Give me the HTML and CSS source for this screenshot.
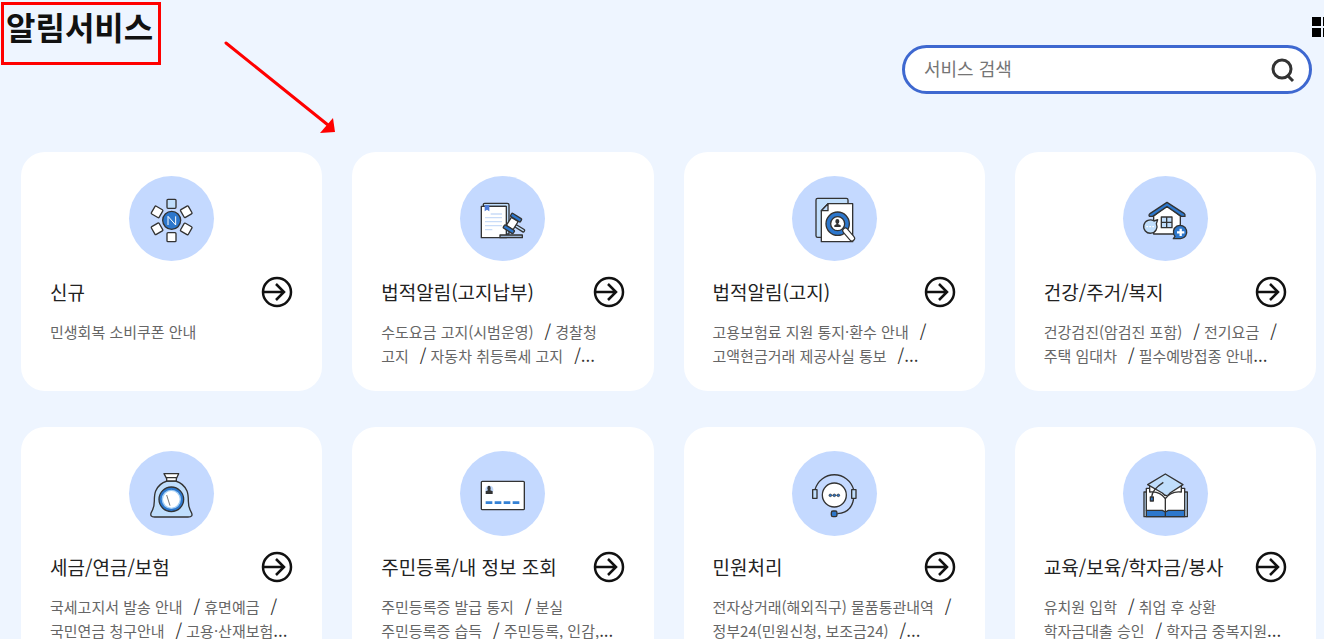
FILE: index.html
```html
<!DOCTYPE html>
<html lang="ko">
<head>
  <meta charset="UTF-8">
  <meta name="viewport" content="width=device-width, initial-scale=1">
  <title>알림서비스</title>
  <link rel="stylesheet" href="styles.css">
</head>
<body>
  <svg width="0" height="0" class="defs">
    <symbol id="go" viewBox="0 0 32 32">
      <circle cx="16" cy="16" r="14"/>
      <path d="M2 16h21M15 8l8 8-8 8"/>
    </symbol>
  </svg>

  <header>
    <h1>알림서비스</h1>
    <form class="search">
      <input type="search" placeholder="서비스 검색" aria-label="서비스 검색">
      <button type="button" aria-label="검색">
        <svg width="26" height="26" viewBox="0 0 26 26"><circle cx="12" cy="12" r="9"/><path d="M17 18l6 6"/></svg>
      </button>
    </form>
    <button class="menu" type="button" aria-label="전체 메뉴">
      <svg width="20" height="20" viewBox="0 0 20 20"><path d="M0 0h9v9H0zM11 0h9v9h-9zM0 11h9v9H0zM11 11h9v9h-9z"/></svg>
    </button>
    <svg class="pointer" width="116" height="96" viewBox="0 0 116 96">
      <path class="line" d="M4 4L106 86"/>
      <path class="head" d="M113 93L98 94 111 79z"/>
    </svg>
  </header>

  <main>
    <section class="card">
      <svg class="icon" viewBox="26 18 255 255">
        <g class="white">
          <rect x="140" y="88" width="27" height="27" rx="3" class="sky"/>
          <rect x="140" y="188" width="27" height="27" rx="3"/>
          <rect x="97" y="112" width="27" height="27" rx="3" transform="rotate(30 110 125)"/>
          <rect x="184" y="112" width="27" height="27" rx="3" transform="rotate(-30 197 125)"/>
          <rect x="97" y="163" width="27" height="27" rx="3" transform="rotate(-30 110 177)"/>
          <rect x="184" y="163" width="27" height="27" rx="3" transform="rotate(30 197 177)"/>
        </g>
        <circle cx="154" cy="151" r="27" class="blue"/>
        <path d="M143 165v-26l23 26v-26" class="mark"/>
      </svg>
      <div class="title"><h2>신규</h2><a href="#" aria-label="신규 바로가기"><svg><use href="#go"/></svg></a></div>
      <p>민생회복 소비쿠폰 안내</p>
    </section>

    <section class="card">
      <svg class="icon" viewBox="31 18 255 255">
        <path d="M101 109v-6q0-3 4-3h68q5 0 5 5v87h-9v-83z" class="sky"/>
        <path d="M95 109h75v94H95z" class="white"/>
        <path d="M105 105h14v19l-7-5-7 5z" class="ribbon"/>
        <path d="M123 132h34M106 143h51M106 155h51M106 167h51M106 179h22" class="rule"/>
        <rect x="151" y="195" width="67" height="8" class="gray"/>
        <g transform="rotate(32 188 160)">
          <rect x="199" y="157" width="32" height="8" rx="3" class="sky"/>
          <rect x="176" y="146" width="24" height="29" class="white"/>
          <rect x="171" y="134" width="35" height="11" rx="3" class="blue"/>
          <rect x="171" y="175" width="35" height="11" rx="3" class="blue"/>
        </g>
      </svg>
      <div class="title"><h2>법적알림(고지납부)</h2><a href="#" aria-label="법적알림(고지납부) 바로가기"><svg><use href="#go"/></svg></a></div>
      <p>수도요금 고지(시범운영)<i>/</i>경찰청<br>고지<i>/</i>자동차 취등록세 고지<i class="end">/</i><span>...</span></p>
    </section>

    <section class="card">
      <svg class="icon" viewBox="20 18 255 255">
        <rect x="92" y="85" width="96" height="117" rx="5" class="sky"/>
        <path d="M128 101h74v114h-94v-93z" class="white"/>
        <path d="M128 101v21h-20z" class="sky"/>
        <circle cx="157" cy="161" r="35" class="blue"/>
        <circle cx="157" cy="161" r="21" fill="#fff"/>
        <path d="M147 171v-5l7-4q-4-3-4-8 0-7 6-7t6 7q0 5-4 8l8 4v5z" class="dark"/>
        <path d="M180 182l20 23" stroke="#333" stroke-width="19" stroke-linecap="round"/>
        <path d="M180 182l20 23" stroke="#fff" stroke-width="12" stroke-linecap="round"/>
      </svg>
      <div class="title"><h2>법적알림(고지)</h2><a href="#" aria-label="법적알림(고지) 바로가기"><svg><use href="#go"/></svg></a></div>
      <p>고용보험료 지원 통지·환수 안내<i>/</i><br>고액현금거래 제공사실 통보<i class="end">/</i><span>...</span></p>
    </section>

    <section class="card">
      <svg class="icon" viewBox="26 18 255 255">
        <path d="M118 138l40-31 40 31v54h-80z" class="white"/>
        <path d="M104 136q0-3 4-6l50-33 51 33q4 3 3 9h-11l-43-29-43 29h-10z" class="blue"/>
        <rect x="141" y="141" width="32" height="32" class="sky"/>
        <path d="M157 141v32M141 157h32"/>
        <path d="M130 149l-4 12a20 20 0 1 1-7-8z" class="sky"/>
        <path d="M96 170h25" class="dots"/>
        <path d="M177 206l5-7a20 20 0 1 1 17 7z" class="blue"/>
        <path d="M199 176v22M188 187h22" class="plus"/>
      </svg>
      <div class="title"><h2>건강/주거/복지</h2><a href="#" aria-label="건강/주거/복지 바로가기"><svg><use href="#go"/></svg></a></div>
      <p>건강검진(암검진 포함)<i>/</i>전기요금<i>/</i><br>주택 임대차<i>/</i>필수예방접종 안내<span>...</span></p>
    </section>

    <section class="card">
      <svg class="icon" viewBox="26 18 255 255">
        <path d="M140 108q-25 8-34 30-4 10-4 30 0 19-9 34-6 14 10 14h100q17 0 10-14-9-15-9-34 0-20-4-30-9-22-34-30z" class="sky"/>
        <path d="M131 86h44l-7 15v7h-29v-7zM138 98h30" class="white"/>
        <circle cx="153" cy="163" r="37" class="blue"/>
        <circle cx="153" cy="163" r="27" class="face"/>
        <path d="M139 150l10 32" class="thin"/>
      </svg>
      <div class="title"><h2>세금/연금/보험</h2><a href="#" aria-label="세금/연금/보험 바로가기"><svg><use href="#go"/></svg></a></div>
      <p>국세고지서 발송 안내<i>/</i>휴면예금<i>/</i><br>국민연금 청구안내<i>/</i>고용·산재보험<span>...</span></p>
    </section>

    <section class="card">
      <svg class="icon" viewBox="31 18 255 255">
        <rect x="95" y="109" width="129" height="85" rx="3" class="white"/>
        <circle cx="119" cy="134" r="12" class="halo"/>
        <path d="M108 147v-8l7-3-2-5q0-9 5-9t5 9l-1 5 7 3v8z" class="dark"/>
        <path d="M108 173h104" class="dash"/>
      </svg>
      <div class="title"><h2>주민등록/내 정보 조회</h2><a href="#" aria-label="주민등록/내 정보 조회 바로가기"><svg><use href="#go"/></svg></a></div>
      <p>주민등록증 발급 통지<i>/</i>분실<br>주민등록증 습득<i>/</i>주민등록, 인감,<span>...</span></p>
    </section>

    <section class="card">
      <svg class="icon" viewBox="20 18 255 255">
        <path d="M89 134a60 60 0 0 1 116 0M205 160q-6 43-49 46"/>
        <circle cx="147" cy="150" r="36" class="white"/>
        <rect x="82" y="134" width="13" height="26" class="sky"/>
        <rect x="199" y="134" width="13" height="26" class="sky"/>
        <rect x="138" y="198" width="17" height="17" rx="5" class="blue"/>
        <path d="M139 151h16" class="thin"/>
        <g class="dot"><circle cx="135" cy="151" r="4"/><circle cx="147" cy="151" r="4"/><circle cx="159" cy="151" r="4"/></g>
      </svg>
      <div class="title"><h2>민원처리</h2><a href="#" aria-label="민원처리 바로가기"><svg><use href="#go"/></svg></a></div>
      <p>전자상거래(해외직구) 물품통관내역<i>/</i><br>정부24(민원신청, 보조금24)<i class="end">/</i><span>...</span></p>
    </section>

    <section class="card">
      <svg class="icon" viewBox="26 18 255 255">
        <path d="M89 141h130v74H89z" class="sky"/>
        <path d="M96 196h115v19H96z" class="blue"/>
        <path d="M96 130h115v66h-49l-9 5-9-5H96z" class="white"/>
        <path d="M106 120v21q30-4 47 20 17-24 48-20v-21z" class="white"/>
        <path d="M153 160v55"/>
        <path d="M100 119l53-32 53 32-39 25q-10 16-23 0z" class="sky"/>
        <path d="M147 112q-34 22-35 43"/>
        <path d="M108 156h9v12h-9z" class="blue"/>
      </svg>
      <div class="title"><h2>교육/보육/학자금/봉사</h2><a href="#" aria-label="교육/보육/학자금/봉사 바로가기"><svg><use href="#go"/></svg></a></div>
      <p>유치원 입학<i>/</i>취업 후 상환<br>학자금대출 승인<i>/</i>학자금 중복지원<span>...</span></p>
    </section>
  </main>
</body>
</html>
```
FILE: styles.css
```css
* {
  box-sizing: border-box;
}
body {
  margin: 0;
  background: #eef5ff;
  color: #111;
  font-family: "Noto Sans CJK KR", sans-serif;
}
button {
  padding: 0;
  border: 0;
  background: none;
  cursor: pointer;
}
.defs {
  position: absolute;
}
header {
  position: relative;
  display: flex;
  justify-content: space-between;
  align-items: flex-start;
  padding: 2px 12px 0 1px;
}
h1 {
  margin: 0;
  width: 160px;
  height: 63px;
  padding: 0 2px;
  border: 3px solid #f00;
  font-size: 32px;
  line-height: 42px;
  font-weight: 700;
  white-space: nowrap;
}
.search {
  display: flex;
  align-items: center;
  width: 410px;
  height: 49px;
  margin-top: 43px;
  padding: 0 13px 0 19px;
  border: 3px solid #3e68d0;
  border-radius: 25px;
  background: #fff;
}
.search input {
  flex: 1;
  min-width: 0;
  padding: 0 0 3px;
  border: 0;
  outline: none;
  background: none;
  font-family: inherit;
  font-size: 18px;
  line-height: 26px;
}
.search input::placeholder {
  color: #757575;
}
.search button {
  height: 26px;
}
.search svg {
  fill: none;
  stroke: #333;
  stroke-width: 3;
}
.menu {
  position: absolute;
  top: 17px;
  right: 0;
  width: 12px;
  height: 20px;
  overflow: hidden;
}
.menu svg {
  display: block;
}
.pointer {
  position: absolute;
  top: 39px;
  left: 222px;
}
.pointer .line {
  stroke: #f00;
  stroke-width: 3;
  stroke-linecap: round;
}
.pointer .head {
  fill: #f00;
}

/* 서비스 카드 */
main {
  display: grid;
  grid-template-columns: repeat(4, minmax(0, 1fr));
  gap: 36px 30px;
  padding: 58px 8px 36px 21px;
}
.card {
  padding: 24px 29px 23px;
  border-radius: 24px;
  background: #fff;
}
.title {
  display: flex;
  align-items: center;
  justify-content: space-between;
  height: 32px;
  margin: 15px 0 12px;
}
h2 {
  margin: 0;
  font-size: 19px;
  line-height: 28px;
  font-weight: 400;
  color: #222;
  white-space: nowrap;
}
.title a {
  height: 32px;
}
.title svg {
  width: 32px;
  height: 32px;
  fill: none;
  stroke: #111;
  stroke-width: 2.5;
}
.card p {
  margin: 0;
  min-height: 48px;
  font-size: 15px;
  line-height: 24px;
  color: #666;
  white-space: nowrap;
}
.card i,
.card span {
  font-size: 17px;
  line-height: 20px;
  font-style: normal;
  color: #333;
}
.card i {
  margin: 0 4px 0 11px;
}
.card .end {
  margin-right: 0;
}

/* 아이콘 */
.icon {
  display: block;
  width: 85px;
  height: 85px;
  margin: 0 auto;
  border-radius: 50%;
  background: #c4d9ff;
  fill: none;
  stroke: #333;
  stroke-width: 4;
  stroke-linejoin: round;
}
.white {
  fill: #fff;
}
.sky {
  fill: #c0defc;
}
.blue {
  fill: #2d77cc;
}
.gray {
  fill: #9fb4cf;
}
.dark {
  fill: #333;
  stroke: none;
}
.face {
  fill: #fff;
  stroke: #9fcdf5;
}
.halo {
  fill: #c0d8fb;
  stroke: none;
}
.ribbon {
  fill: #4e7bd8;
  stroke: none;
}
.rule {
  stroke: #c9dcf8;
}
.mark {
  stroke: #fff;
  stroke-width: 3;
}
.thin {
  stroke-width: 2;
}
.dots {
  stroke: #fff;
  stroke-dasharray: 5 4;
}
.plus {
  stroke: #fff;
  stroke-width: 7;
}
.dash {
  stroke: #3581d4;
  stroke-width: 8;
  stroke-dasharray: 20 7;
}
.dot {
  fill: #2d77cc;
  stroke-width: 2;
}
```
